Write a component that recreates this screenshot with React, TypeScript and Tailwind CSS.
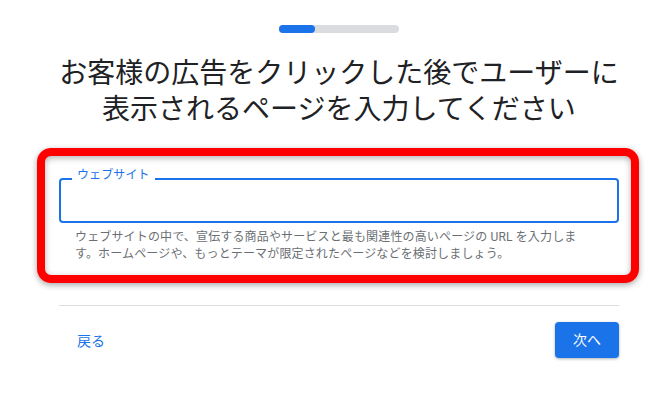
export default function App() {
  return (
    <div
      className="min-h-screen w-full bg-white pl-2"
      style={{ fontFamily: 'Roboto, "Noto Sans CJK JP", sans-serif' }}
    >
      <div className="mx-auto w-[560px] pt-[25px]">
        {/* progress */}
        <div className="mx-auto h-[8px] w-[120px] rounded-full bg-[#dadce0]">
          <div className="h-full w-[36px] rounded-full bg-[#1a73e8]" />
        </div>

        <h1 className="mt-[23px] text-center text-[28px] font-normal leading-[36px] text-[#202124]">
          お客様の広告をクリックした後でユーザーに
          <br />
          表示されるページを入力してください
        </h1>

        {/* highlighted field */}
        <div className="mt-[20px] ml-[-22px] mr-[-20px] rounded-[14px] border-[8px] border-[#ff0000] pt-[22px] pb-[12px] pl-[14px] pr-[12px] shadow-[0_2px_6px_rgba(0,0,0,0.35),inset_0_2px_6px_rgba(0,0,0,0.3)]">
          <div className="relative h-[45px] rounded-[4px] border-2 border-[#1a73e8]">
            <span className="absolute left-[11px] -top-[13px] bg-white px-[5px] text-[12px] leading-[16px] tracking-[0.1px] text-[#1a73e8]">
              ウェブサイト
            </span>
          </div>
          <p className="mt-[6px] px-4 text-[12px] leading-[17px] tracking-[0.15px] text-[#6b6f74]">
            ウェブサイトの中で、宣伝する商品やサービスと最も関連性の高いページの URL を入力しま
            <br />
            す。ホームページや、もっとテーマが限定されたページなどを検討しましょう。
          </p>
        </div>

        <div className="mt-[22px] h-px bg-[#dadce0]" />

        <div className="mt-[16px] flex items-center justify-between">
          <button className="h-[36px] px-[18px] pt-[3px] text-[14px] text-[#1a73e8]">戻る</button>
          <button className="h-[36px] w-[64px] rounded-[4px] bg-[#1a73e8] text-[14px] text-white shadow-[0_1px_3px_rgba(60,64,67,0.4)]">
            次へ
          </button>
        </div>
      </div>
    </div>
  );
}
